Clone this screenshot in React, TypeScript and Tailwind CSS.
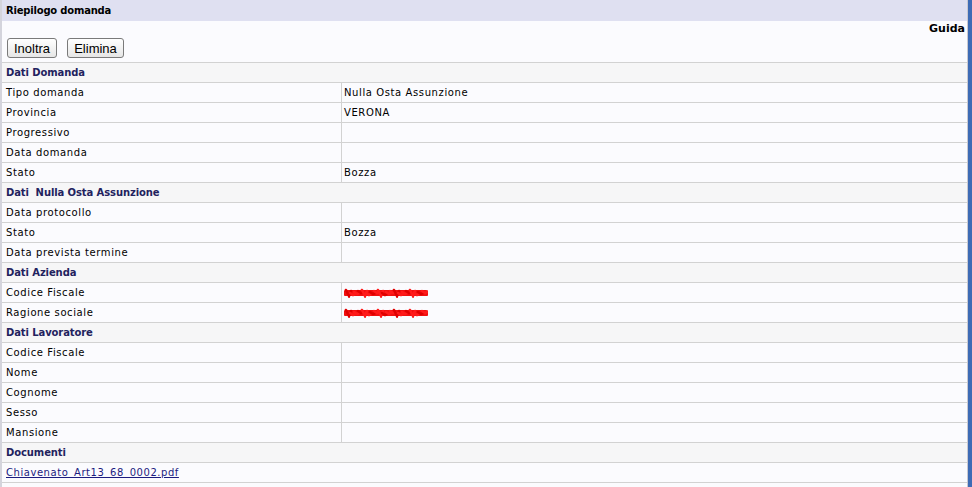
import React from "react";

type Row =
  | { kind: "section"; title: string }
  | { kind: "data"; label: string; value?: string; redact?: boolean }
  | { kind: "link"; text: string };

const rows: Row[] = [
  { kind: "section", title: "Dati Domanda" },
  { kind: "data", label: "Tipo domanda", value: "Nulla Osta Assunzione" },
  { kind: "data", label: "Provincia", value: "VERONA" },
  { kind: "data", label: "Progressivo" },
  { kind: "data", label: "Data domanda" },
  { kind: "data", label: "Stato", value: "Bozza" },
  { kind: "section", title: "Dati\u00a0 Nulla Osta Assunzione" },
  { kind: "data", label: "Data protocollo" },
  { kind: "data", label: "Stato", value: "Bozza" },
  { kind: "data", label: "Data prevista termine" },
  { kind: "section", title: "Dati Azienda" },
  { kind: "data", label: "Codice Fiscale", redact: true },
  { kind: "data", label: "Ragione sociale", redact: true },
  { kind: "section", title: "Dati Lavoratore" },
  { kind: "data", label: "Codice Fiscale" },
  { kind: "data", label: "Nome" },
  { kind: "data", label: "Cognome" },
  { kind: "data", label: "Sesso" },
  { kind: "data", label: "Mansione" },
  { kind: "section", title: "Documenti" },
  { kind: "link", text: "Chiavenato Art13 68 0002.pdf" },
];

function Redacted() {
  const blobs: React.ReactNode[] = [];
  for (let i = 0; i < 20; i++) {
    const x = 2 + i * 4;
    const y1 = 2 + ((i * 7) % 4);
    const y2 = 8 - ((i * 5) % 4);
    blobs.push(
      <path
        key={i}
        d={`M${x} ${y1} L${x + 3} ${y2} L${x + 5} ${y1 + 1}`}
        stroke={i % 3 === 0 ? "#e00000" : "#ff1a1a"}
        strokeWidth="2.6"
        fill="none"
        strokeLinecap="round"
      />
    );
  }
  return (
    <svg width="84" height="10" viewBox="0 0 84 10" className="block">
      <path
        d="M2 5 L82 5"
        stroke="#f01010"
        strokeWidth="6"
        strokeLinecap="round"
      />
      {blobs}
    </svg>
  );
}

export default function App() {
  const font = { fontFamily: '"DejaVu Sans", Verdana, sans-serif' };
  return (
    <div className="flex h-[487px] w-[972px] bg-white" style={font}>
      <div className="flex w-[967px] flex-col border-l-2 border-[#d4d4dc] bg-[#fbfbfe] text-[10px] text-black">
        <div className="flex h-[21px] items-center bg-[#dfe0f1] pl-[4px] text-[10px] font-bold tracking-[-0.2px] text-black">
          Riepilogo domanda
        </div>
        <div className="flex h-[13px] items-end justify-end pr-[2px] text-[11px] font-bold leading-none">
          Guida
        </div>
        <div className="flex h-[28px] items-center gap-[10px] pl-[5px]">
          <button
            className="h-[20px] w-[50px] rounded-[3px] border border-[#7a7a7a] bg-gradient-to-b from-white to-[#e6e6e6] text-[13px] leading-none text-black"
            style={{ fontFamily: '"Liberation Sans", Arial, sans-serif' }}
          >
            Inoltra
          </button>
          <button
            className="h-[20px] w-[57px] rounded-[3px] border border-[#7a7a7a] bg-gradient-to-b from-white to-[#e6e6e6] text-[13px] leading-none text-black"
            style={{ fontFamily: '"Liberation Sans", Arial, sans-serif' }}
          >
            Elimina
          </button>
        </div>
        <div className="flex flex-col border-b border-[#d2d2d2]">
          {rows.map((r, i) => {
            if (r.kind === "section") {
              return (
                <div
                  key={i}
                  className="flex h-[20px] items-center border-t border-[#d2d2d2] bg-[#f6f6f7] pl-[4px] text-[10px] font-bold tracking-[-0.1px] text-[#22225e]"
                >
                  {r.title}
                </div>
              );
            }
            if (r.kind === "link") {
              return (
                <div
                  key={i}
                  className="flex h-[20px] items-center border-t border-[#d2d2d2] pl-[4px] tracking-[0.55px] [word-spacing:2px]"
                >
                  <a href="#" className="text-[#1c1c80] underline">
                    {r.text}
                  </a>
                </div>
              );
            }
            return (
              <div
                key={i}
                className="flex h-[20px] border-t border-[#d2d2d2] tracking-[0.6px]"
              >
                <div className="flex w-[340px] items-center border-r border-[#d2d2d2] pl-[4px]">
                  {r.label}
                </div>
                <div className="flex flex-1 items-center pl-[2px]">
                  {r.redact ? <Redacted /> : r.value}
                </div>
              </div>
            );
          })}
        </div>
      </div>
      <div className="w-px bg-[#c8c8d0]" />
      <div className="w-[4px] bg-[#3d6bb5]" />
    </div>
  );
}
